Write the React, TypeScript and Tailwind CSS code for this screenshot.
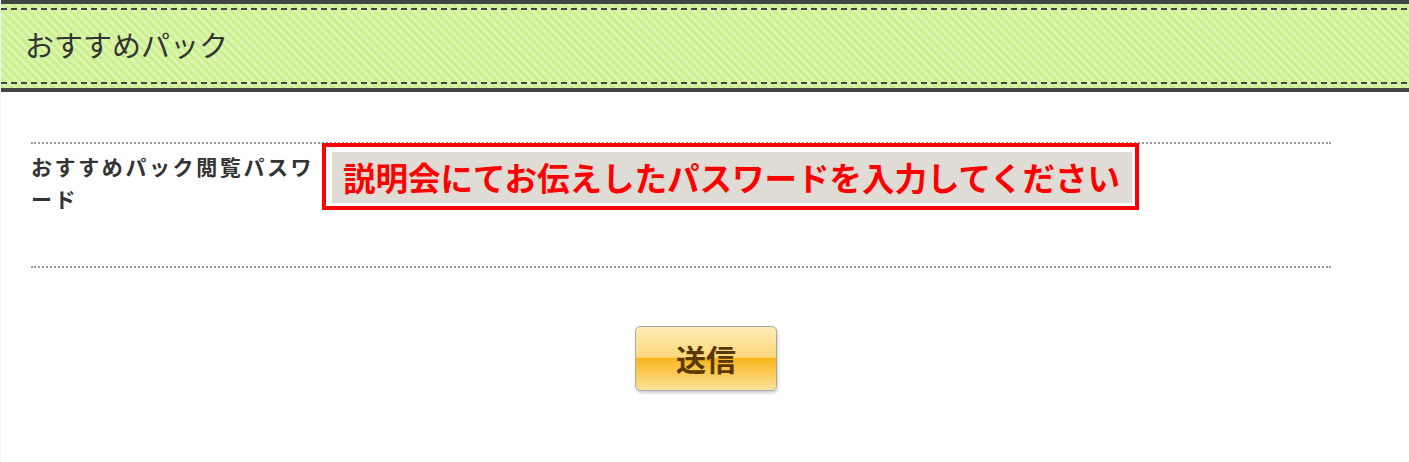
export default function App() {
  return (
    <div className="min-h-[462px] bg-[#eef5f9] pl-px font-['Noto_Sans_CJK_JP','Noto_Sans',sans-serif] text-[#333]">
      <div className="min-h-[462px] bg-white">
        {/* header band */}
        <div className="border-y-4 border-[#444] bg-[repeating-linear-gradient(45deg,#cdf08f_0px,#cdf08f_3px,#dbf4af_3px,#dbf4af_6px)] py-[4px]">
          <div className="h-[2px] bg-[repeating-linear-gradient(to_right,#444_0px,#444_6px,transparent_6px,transparent_10px)]" />
          <div className="flex h-[72px] items-center pb-[3px] pl-[24px] text-[29px] leading-none">おすすめパック</div>
          <div className="h-[2px] bg-[repeating-linear-gradient(to_right,#444_0px,#444_6px,transparent_6px,transparent_10px)]" />
        </div>

        {/* form */}
        <div className="pl-[30px] pt-[50px]">
          <div className="flex h-[126px] w-[1300px] border-y-2 border-dotted border-[#999]">
            <div className="w-[291px] pt-[6px] text-[21px] font-bold leading-[32px] tracking-[2.6px]">
              おすすめパック閲覧パスワード
            </div>
            <div className="-mt-[1px]">
              <div className="border-4 border-[#ff0000] bg-white pb-[3px] pl-[6px] pr-[3px] pt-[5px]">
                <div className="flex h-[51px] w-[800px] items-center bg-[#dfdcd5] pl-[11px] text-[32.5px] font-bold leading-none text-[#ff0000]">
                  説明会にてお伝えしたパスワードを入力してください
                </div>
              </div>
            </div>
          </div>
        </div>

        <div className="flex pl-[634px] pt-[58px]">
          <button className="flex h-[65px] w-[142px] items-center justify-center rounded-[5px] border border-[#a9a9a9] bg-[linear-gradient(to_bottom,#feebb8_0%,#fdd97a_48%,#f8b61c_50%,#fbcb5a_75%,#fde29c_100%)] text-[30px] font-bold text-[#5a3806] shadow-[1px_2px_3px_rgba(0,0,0,0.2)]">
            送信
          </button>
        </div>
      </div>
    </div>
  )
}
